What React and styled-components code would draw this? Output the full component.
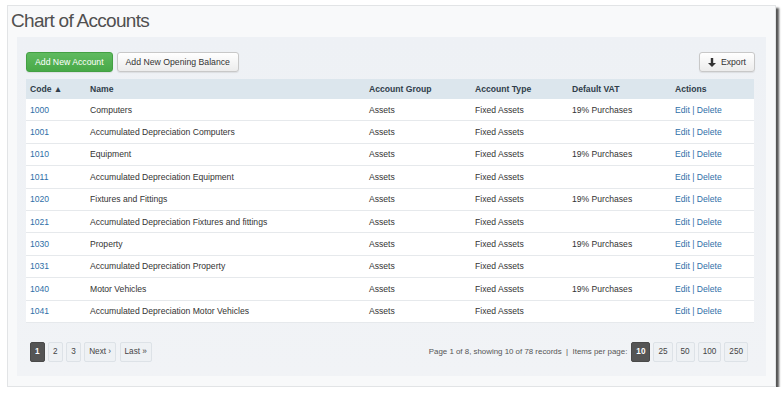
import React from "react";
import styled, { createGlobalStyle } from "styled-components";

const accounts = [
  { code: "1000", name: "Computers", vat: "19% Purchases" },
  { code: "1001", name: "Accumulated Depreciation Computers", vat: "" },
  { code: "1010", name: "Equipment", vat: "19% Purchases" },
  { code: "1011", name: "Accumulated Depreciation Equipment", vat: "" },
  { code: "1020", name: "Fixtures and Fittings", vat: "19% Purchases" },
  { code: "1021", name: "Accumulated Depreciation Fixtures and fittings", vat: "" },
  { code: "1030", name: "Property", vat: "19% Purchases" },
  { code: "1031", name: "Accumulated Depreciation Property", vat: "" },
  { code: "1040", name: "Motor Vehicles", vat: "19% Purchases" },
  { code: "1041", name: "Accumulated Depreciation Motor Vehicles", vat: "" },
];

const App = () => {
  return (
    <>
      <GlobalStyle />
      <Frame>
        <Title>Chart of Accounts</Title>
        <Panel>
          <Toolbar>
            <Button primary>Add New Account</Button>
            <Button>Add New Opening Balance</Button>
            <Spacer />
            <Button>
              <svg width="8" height="9" viewBox="0 0 8 9">
                <path d="M2.8 0h2.4v5H8L4 9 0 5h2.8z" fill="#333" />
              </svg>
              Export
            </Button>
          </Toolbar>
          <Table>
            <colgroup>
              <col style={{ width: 60 }} />
              <col style={{ width: 279 }} />
              <col style={{ width: 106 }} />
              <col style={{ width: 97 }} />
              <col style={{ width: 103 }} />
              <col />
            </colgroup>
            <thead>
              <tr>
                <Th>Code &#9650;</Th>
                <Th>Name</Th>
                <Th>Account Group</Th>
                <Th>Account Type</Th>
                <Th>Default VAT</Th>
                <Th>Actions</Th>
              </tr>
            </thead>
            <tbody>
              {accounts.map((a) => (
                <tr key={a.code}>
                  <Td>
                    <Link>{a.code}</Link>
                  </Td>
                  <Td>{a.name}</Td>
                  <Td>Assets</Td>
                  <Td>Fixed Assets</Td>
                  <Td>{a.vat}</Td>
                  <Td>
                    <Link>Edit</Link> <Link>|</Link> <Link>Delete</Link>
                  </Td>
                </tr>
              ))}
            </tbody>
          </Table>
          <Footer>
            <Pager gap={3.5}>
              <PageButton active>1</PageButton>
              <PageButton>2</PageButton>
              <PageButton>3</PageButton>
              <PageButton wide>Next ›</PageButton>
              <PageButton wide>Last »</PageButton>
            </Pager>
            <Pager gap={3}>
              <Info>Page 1 of 8, showing 10 of 78 records &nbsp;| &nbsp;Items per page:</Info>
              <PageButton active>10</PageButton>
              <PageButton>25</PageButton>
              <PageButton>50</PageButton>
              <PageButton>100</PageButton>
              <PageButton>250</PageButton>
            </Pager>
          </Footer>
        </Panel>
      </Frame>
    </>
  );
};

export default App;

// Styling

const GlobalStyle = createGlobalStyle`
  body {
    margin: 0;
    background: #ffffff;
    font-family: "Liberation Sans", Arial, sans-serif;
  }
`;

const Frame = styled.div`
  box-sizing: border-box;
  margin: 5px 0 0 7px;
  width: 769px;
  height: 382px;
  background: #f8f9fa;
  border: 1px solid #e2e4e6;
  box-shadow: 3px 3px 2px #555555;
  display: flex;
  flex-direction: column;
`;

const Title = styled.h1`
  margin: 0;
  padding: 3px 0 0 3px;
  height: 31px;
  box-sizing: border-box;
  font-size: 19px;
  letter-spacing: -0.7px;
  font-weight: normal;
  color: #505050;
  line-height: 24px;
`;

const Panel = styled.div`
  margin: 0 9px;
  background: linear-gradient(#eef1f5, #f1f3f6);
  height: 339px;
  box-sizing: border-box;
  padding: 15px 11px 0 9px;
  display: flex;
  flex-direction: column;
`;

const Toolbar = styled.div`
  display: flex;
  gap: 4px;
  height: 20px;
  margin-bottom: 7px;
`;

const Spacer = styled.div`
  flex: 1;
`;

const Button = styled.div`
  box-sizing: border-box;
  height: 20px;
  padding: 0 8px;
  display: flex;
  align-items: center;
  gap: 5px;
  font-size: 8.7px;
  border-radius: 3px;
  color: ${(p) => (p.primary ? "#ffffff" : "#333333")};
  background: ${(p) =>
    p.primary
      ? "linear-gradient(#5fba5f, #48a948)"
      : "linear-gradient(#ffffff, #ececec)"};
  border: 1px solid ${(p) => (p.primary ? "#43a043" : "#c8c8c8")};
  box-shadow: 0 1px 1px rgba(0, 0, 0, 0.08);
`;

const Table = styled.table`
  width: 728px;
  border-collapse: collapse;
  table-layout: fixed;
  font-size: 8.6px;
  color: #333333;
`;

const Th = styled.th`
  height: 20px;
  padding: 0 4px;
  text-align: left;
  font-weight: bold;
  color: #2f3d4a;
  background: #dce6ed;
`;

const Td = styled.td`
  height: 21.4px;
  padding: 0 4px;
  background: #ffffff;
  border-bottom: 1px solid #e6e9ec;
  white-space: nowrap;
`;

const Link = styled.span`
  color: #2f6fa8;
`;

const Footer = styled.div`
  display: flex;
  justify-content: space-between;
  align-items: center;
  margin-top: 19px;
  padding: 0 7px 0 4px;
`;

const Pager = styled.div`
  display: flex;
  align-items: center;
  gap: ${(p) => p.gap}px;
`;

const Info = styled.span`
  font-size: 7.9px;
  color: #555555;
  margin-right: 1px;
`;

const PageButton = styled.div`
  box-sizing: border-box;
  height: 20px;
  min-width: ${(p) => (p.wide ? "31px" : "14px")};
  padding: 0 4px;
  display: flex;
  align-items: center;
  justify-content: center;
  font-size: 8.2px;
  font-weight: ${(p) => (p.active ? "bold" : "normal")};
  color: ${(p) => (p.active ? "#ffffff" : "#444444")};
  background: ${(p) => (p.active ? "#555555" : "#eef1f4")};
  border: 1px solid ${(p) => (p.active ? "#4a4a4a" : "#dde2e7")};
  border-radius: 2px;
`;
